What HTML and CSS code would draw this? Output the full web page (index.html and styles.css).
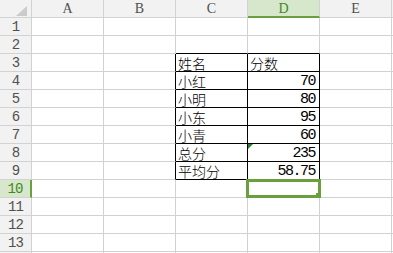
FILE: index.html
```html
<!DOCTYPE html>
<html lang="zh-CN">
<head>
<meta charset="utf-8">
<title>Sheet</title>
<link rel="stylesheet" href="styles.css">
</head>
<body>
<div class="sheet">
  <div class="h corner"><span class="tri"></span></div>
  <div class="h">A</div><div class="h">B</div><div class="h">C</div><div class="h hsel">D</div><div class="h">E</div><div class="h"></div>

  <div class="r">1</div><div class="c"></div><div class="c"></div><div class="c"></div><div class="c"></div><div class="c"></div><div class="c"></div>
  <div class="r">2</div><div class="c"></div><div class="c"></div><div class="c tt"></div><div class="c tt"></div><div class="c"></div><div class="c"></div>

  <div class="r">3</div><div class="c"></div><div class="c tl"></div><div class="c t txt">姓名</div><div class="c t txt">分数</div><div class="c"></div><div class="c"></div>
  <div class="r">4</div><div class="c"></div><div class="c tl"></div><div class="c t txt">小红</div><div class="c t num">70</div><div class="c"></div><div class="c"></div>
  <div class="r">5</div><div class="c"></div><div class="c tl"></div><div class="c t txt">小明</div><div class="c t num">80</div><div class="c"></div><div class="c"></div>
  <div class="r">6</div><div class="c"></div><div class="c tl"></div><div class="c t txt">小东</div><div class="c t num">95</div><div class="c"></div><div class="c"></div>
  <div class="r">7</div><div class="c"></div><div class="c tl"></div><div class="c t txt">小青</div><div class="c t num">60</div><div class="c"></div><div class="c"></div>
  <div class="r">8</div><div class="c"></div><div class="c tl"></div><div class="c t txt">总分</div><div class="c t num flag">235</div><div class="c"></div><div class="c"></div>
  <div class="r">9</div><div class="c"></div><div class="c tl"></div><div class="c t txt">平均分</div><div class="c t num">58.75</div><div class="c"></div><div class="c"></div>

  <div class="r rsel">10</div><div class="c"></div><div class="c"></div><div class="c"></div><div class="c active"><span class="handle"></span></div><div class="c"></div><div class="c"></div>
  <div class="r">11</div><div class="c"></div><div class="c"></div><div class="c"></div><div class="c"></div><div class="c"></div><div class="c"></div>
  <div class="r">12</div><div class="c"></div><div class="c"></div><div class="c"></div><div class="c"></div><div class="c"></div><div class="c"></div>
  <div class="r">13</div><div class="c"></div><div class="c"></div><div class="c"></div><div class="c"></div><div class="c"></div><div class="c"></div>
  <div class="r"></div><div class="c"></div><div class="c"></div><div class="c"></div><div class="c"></div><div class="c"></div><div class="c"></div>
</div>
</body>
</html>
```

FILE: styles.css
```css
html, body {
  margin: 0;
  padding: 0;
  background: #ffffff;
  overflow: hidden;
}

.sheet {
  display: grid;
  grid-template-columns: 32px 72px 72px 72px 72px 72px 20px;
  grid-auto-rows: 18px;
  width: 393px;
  height: 253px;
  overflow: hidden;
}

.sheet > div {
  box-sizing: border-box;
  border-right: 1px solid #d2d2d2;
  border-bottom: 1px solid #d2d2d2;
}

.h, .r {
  background: #f2f2f2;
  color: #505050;
  font-family: "Liberation Serif", serif;
  font-size: 14px;
  display: flex;
  align-items: center;
  justify-content: center;
  line-height: 1;
  padding-top: 1px;
}

.r {
  font-family: "Liberation Mono", monospace;
  letter-spacing: -1px;
}

.corner {
  justify-content: flex-end;
  align-items: flex-end;
  padding: 0 4px 1px 0;
}

.tri {
  width: 0;
  height: 0;
  border-left: 11px solid transparent;
  border-bottom: 10px solid #cbcbcb;
}

.hsel {
  background: #d6e7cc;
  color: #3f8a25;
  border-bottom: 2px solid #6a9f40 !important;
}

.rsel {
  background: #d6e7cc;
  color: #3f8a25;
  border-right: 2px solid #6a9f40 !important;
}

.c {
  background: #ffffff;
}

.t {
  border-right-color: #000 !important;
  border-bottom-color: #000 !important;
}

.tt {
  border-bottom-color: #000 !important;
}

.tl {
  border-right-color: #000 !important;
}

.txt {
  font-family: "Noto Sans CJK SC", sans-serif;
  font-weight: 300;
  font-size: 14px;
  color: #000;
  display: flex;
  align-items: center;
  padding: 1px 0 0 2px;
  line-height: 16px;
  overflow: hidden;
}

.num {
  font-family: "Liberation Mono", monospace;
  font-size: 15px;
  letter-spacing: -1.5px;
  color: #000;
  display: flex;
  align-items: center;
  justify-content: flex-end;
  padding: 1px 4px 0 0;
  line-height: 1;
}

.flag {
  position: relative;
}

.flag::before {
  content: "";
  position: absolute;
  left: 0;
  top: 0;
  width: 0;
  height: 0;
  border-top: 5px solid #2f7d2f;
  border-right: 5px solid transparent;
}

.active {
  position: relative;
}

.active::after {
  content: "";
  position: absolute;
  left: -2px;
  top: -1px;
  right: -2px;
  bottom: -1px;
  border: 3px solid #6a9f40;
}

.handle {
  position: absolute;
  right: -2px;
  bottom: -1px;
  width: 5px;
  height: 5px;
  background: #6a9f40;
  z-index: 1;
}
```
